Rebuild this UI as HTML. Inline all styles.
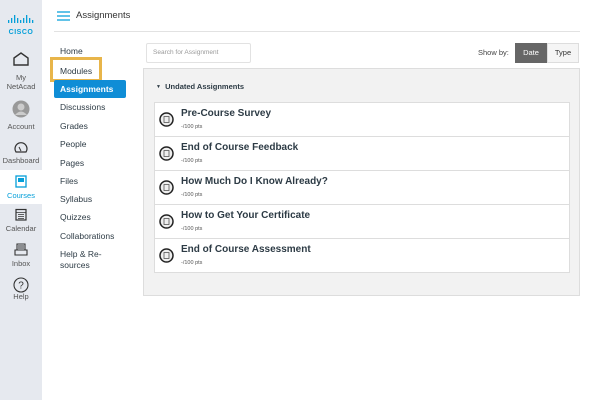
<!DOCTYPE html>
<html><head><meta charset="utf-8"><style>
*{margin:0;padding:0;box-sizing:border-box}
body{width:600px;height:400px;overflow:hidden;background:#fff;font-family:"Liberation Sans",sans-serif;position:relative;color:#2d3b45}
.a{position:absolute}
#side{left:0;top:0;width:42px;height:400px;background:#e6e9ef}
.si{position:absolute;left:0;width:42px;text-align:center;font-size:7.5px;color:#555;line-height:9px}
.nav{position:absolute;left:60px;font-size:8.5px;color:#2d3b45}
.row{position:absolute;left:154px;width:416px;height:34px;background:#fff;border:1px solid #ddd;border-top:none}
.row .t{position:absolute;left:26px;top:5px;font-size:10px;font-weight:bold;color:#2d3b45}
.row .p{position:absolute;left:26px;top:21px;font-size:5.5px;color:#555}
.row svg{position:absolute;left:4px;top:9px}
</style></head><body>
<div id="side" class="a"></div>
<div class="a" style="left:6px;top:11px;width:30px;text-align:center">
<svg width="30" height="9" viewBox="0 0 30 9"><g fill="#049fd9"><rect x="2" y="5" width="1.3" height="3"/><rect x="5" y="3" width="1.3" height="5"/><rect x="8" y="0" width="1.3" height="8"/><rect x="11" y="3" width="1.3" height="5"/><rect x="14" y="5" width="1.3" height="3"/><rect x="17" y="3" width="1.3" height="5"/><rect x="20" y="0" width="1.3" height="8"/><rect x="23" y="3" width="1.3" height="5"/><rect x="26" y="5" width="1.3" height="3"/></g></svg>
<div style="font-size:7px;font-weight:bold;color:#049fd9;letter-spacing:0.5px;line-height:7px">CISCO</div></div>
<svg class="a" style="left:13px;top:52px" width="16" height="14"><path d="M1 6 L8 1 L15 6 V13 H1 Z" fill="none" stroke="#333" stroke-width="1.4"/></svg>
<div class="si" style="top:73px">My<br>NetAcad</div>
<svg class="a" style="left:12px;top:100px" width="18" height="18"><circle cx="9" cy="9" r="8.5" fill="#999"/><circle cx="9" cy="7" r="3.5" fill="#ccc"/><path d="M3 15 Q9 8 15 15" fill="#ccc"/></svg>
<div class="si" style="top:122px">Account</div>
<svg class="a" style="left:14px;top:142px" width="14" height="11"><path d="M2 10 A6 6 0 1 1 12 10 Z" fill="none" stroke="#333" stroke-width="1.2"/><path d="M7 9 L5 5" stroke="#333"/></svg>
<div class="si" style="top:156px">Dashboard</div>
<div class="a" style="left:0;top:170px;width:42px;height:34px;background:#fff"></div>
<svg class="a" style="left:15px;top:175px" width="12" height="13"><rect x="1" y="1" width="10" height="11" fill="none" stroke="#049fd9" stroke-width="1.3"/><rect x="3" y="3" width="6" height="4" fill="#049fd9"/></svg>
<div class="si" style="top:191px;color:#049fd9">Courses</div>
<svg class="a" style="left:15px;top:208px" width="12" height="13"><rect x="1" y="1.5" width="10" height="10.5" fill="none" stroke="#333" stroke-width="1.2"/><path d="M1 4.5H11M3 6.5H9M3 8.5H9M3 10.5H9" stroke="#333" stroke-width=".8"/></svg>
<div class="si" style="top:224px">Calendar</div>
<svg class="a" style="left:14px;top:243px" width="14" height="13"><path d="M3 7V1H11V7M1 7H13V12H1Z M4 3H10M4 5H10" fill="none" stroke="#333" stroke-width="1.1"/></svg>
<div class="si" style="top:259px">Inbox</div>
<svg class="a" style="left:13px;top:277px" width="16" height="16"><circle cx="8" cy="8" r="7" fill="none" stroke="#333" stroke-width="1.1"/><text x="8" y="11.5" font-size="10" text-anchor="middle" fill="#333" font-family="Liberation Sans">?</text></svg>
<div class="si" style="top:292px">Help</div>

<svg class="a" style="left:57px;top:11px" width="13" height="10"><path d="M0 1H13M0 5H13M0 9H13" stroke="#049fd9" stroke-width="1.3"/></svg>
<div class="a" style="left:76px;top:10px;font-size:9.5px;color:#333">Assignments</div>
<div class="a" style="left:54px;top:31px;width:526px;height:1px;background:#e2e2e2"></div>

<div class="nav" style="top:46px">Home</div>
<div class="a" style="left:50px;top:57px;width:52px;height:25px;border:3px solid #e8b54a;background:#fff"></div>
<div class="nav" style="top:66px">Modules</div>
<div class="a" style="left:54px;top:80px;width:72px;height:18px;background:#0f8dd6;border-radius:2px"></div>
<div class="nav" style="top:84px;color:#fff;font-weight:bold">Assignments</div>
<div class="nav" style="top:102px">Discussions</div>
<div class="nav" style="top:121px">Grades</div>
<div class="nav" style="top:139px">People</div>
<div class="nav" style="top:158px">Pages</div>
<div class="nav" style="top:176px">Files</div>
<div class="nav" style="top:194px">Syllabus</div>
<div class="nav" style="top:212px">Quizzes</div>
<div class="nav" style="top:231px">Collaborations</div>
<div class="nav" style="top:249px;line-height:11px">Help &amp; Re-<br>sources</div>

<div class="a" style="left:146px;top:43px;width:105px;height:20px;border:1px solid #e2e2e2;border-radius:2px;font-size:6.5px;color:#999;padding:5px 6px">Search for Assignment</div>
<div class="a" style="left:478px;top:48px;font-size:7.5px;color:#444">Show by:</div>
<div class="a" style="left:515px;top:43px;width:32px;height:20px;background:#666;color:#fff;font-size:7.5px;text-align:center;line-height:20px">Date</div>
<div class="a" style="left:547px;top:43px;width:32px;height:20px;background:#f5f5f5;border:1px solid #ddd;color:#333;font-size:7.5px;text-align:center;line-height:18px">Type</div>

<div class="a" style="left:143px;top:68px;width:437px;height:228px;background:#f2f2f2;border:1px solid #ddd"></div>
<div class="a" style="left:156px;top:82px;font-size:7.5px;font-weight:bold;color:#2d3b45"><span style="font-size:5px;vertical-align:1px">▼</span>&nbsp; Undated Assignments</div>
<div class="a" style="left:154px;top:102px;width:416px;height:1px;background:#ddd"></div>

<div class="row" style="top:103px"><svg width="15" height="15"><circle cx="7.5" cy="7.5" r="6.5" fill="#eee" stroke="#222" stroke-width="1.5"/><rect x="5" y="4.5" width="5" height="6" fill="none" stroke="#555" stroke-width=".8"/></svg><div class="t">Pre-Course Survey</div><div class="p">-/100 pts</div></div>
<div class="row" style="top:137px"><svg width="15" height="15"><circle cx="7.5" cy="7.5" r="6.5" fill="#eee" stroke="#222" stroke-width="1.5"/><rect x="5" y="4.5" width="5" height="6" fill="none" stroke="#555" stroke-width=".8"/></svg><div class="t">End of Course Feedback</div><div class="p">-/100 pts</div></div>
<div class="row" style="top:171px"><svg width="15" height="15"><circle cx="7.5" cy="7.5" r="6.5" fill="#eee" stroke="#222" stroke-width="1.5"/><rect x="5" y="4.5" width="5" height="6" fill="none" stroke="#555" stroke-width=".8"/></svg><div class="t">How Much Do I Know Already?</div><div class="p">-/100 pts</div></div>
<div class="row" style="top:205px"><svg width="15" height="15"><circle cx="7.5" cy="7.5" r="6.5" fill="#eee" stroke="#222" stroke-width="1.5"/><rect x="5" y="4.5" width="5" height="6" fill="none" stroke="#555" stroke-width=".8"/></svg><div class="t">How to Get Your Certificate</div><div class="p">-/100 pts</div></div>
<div class="row" style="top:239px"><svg width="15" height="15"><circle cx="7.5" cy="7.5" r="6.5" fill="#eee" stroke="#222" stroke-width="1.5"/><rect x="5" y="4.5" width="5" height="6" fill="none" stroke="#555" stroke-width=".8"/></svg><div class="t">End of Course Assessment</div><div class="p">-/100 pts</div></div>
</body></html>
